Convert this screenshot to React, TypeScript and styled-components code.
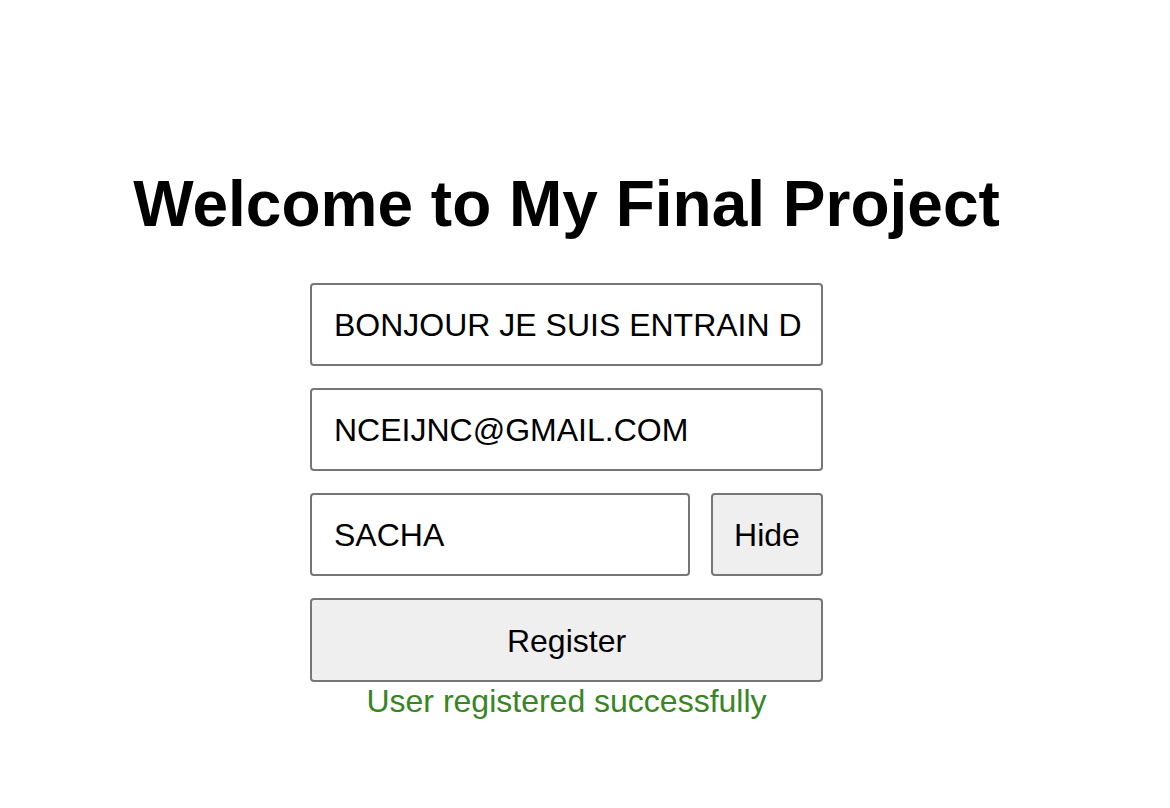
import React from "react";
import styled, { createGlobalStyle } from "styled-components";

const GlobalStyle = createGlobalStyle`
  html, body {
    margin: 0;
    padding: 0;
    background: #ffffff;
    font-family: "Liberation Sans", Arial, sans-serif;
    color: #000000;
  }
`;

const Page = styled.main`
  width: 1133px;
  display: flex;
  flex-direction: column;
  align-items: center;
  padding-top: 167px;
`;

const Title = styled.h1`
  margin: 0 0 42px;
  font-size: 64px;
  line-height: 74px;
  font-weight: 700;
  white-space: nowrap;
`;

const Form = styled.form`
  width: 513px;
  display: flex;
  flex-direction: column;
  gap: 22px;
`;

const Row = styled.div`
  display: flex;
  gap: 21px;
`;

const Input = styled.input<{ $grow?: boolean }>`
  box-sizing: border-box;
  height: 83px;
  width: 100%;
  min-width: 0;
  flex: ${(p) => (p.$grow ? "1 1 auto" : "none")};
  padding: 2px 20px 0 22px;
  border: 2px solid #767676;
  border-radius: 4px;
  background: #ffffff;
  font-family: "Liberation Sans", Arial, sans-serif;
  font-size: 32px;
  color: #000000;
  outline: none;
`;

const Button = styled.button<{ $wide?: boolean }>`
  box-sizing: border-box;
  height: ${(p) => (p.$wide ? "84px" : "83px")};
  width: ${(p) => (p.$wide ? "100%" : "112px")};
  flex: none;
  padding: 2px 0 0;
  border: 2px solid #767676;
  border-radius: 4px;
  background: #efefef;
  font-family: "Liberation Sans", Arial, sans-serif;
  font-size: 32px;
  color: #000000;
  cursor: pointer;
`;

const Message = styled.p`
  margin: -21px 0 0;
  font-size: 32px;
  line-height: 37px;
  color: #388524;
  text-align: center;
`;

export default function App() {
  return (
    <>
      <GlobalStyle />
      <Page>
        <Title>Welcome to My Final Project</Title>
        <Form onSubmit={(e) => e.preventDefault()}>
          <Input type="text" defaultValue="BONJOUR JE SUIS ENTRAIN DE TESTER" />
          <Input type="email" defaultValue="NCEIJNC@GMAIL.COM" />
          <Row>
            <Input $grow type="text" defaultValue="SACHA" />
            <Button type="button">Hide</Button>
          </Row>
          <Button type="submit" $wide>
            Register
          </Button>
          <Message>User registered successfully</Message>
        </Form>
      </Page>
    </>
  );
}
